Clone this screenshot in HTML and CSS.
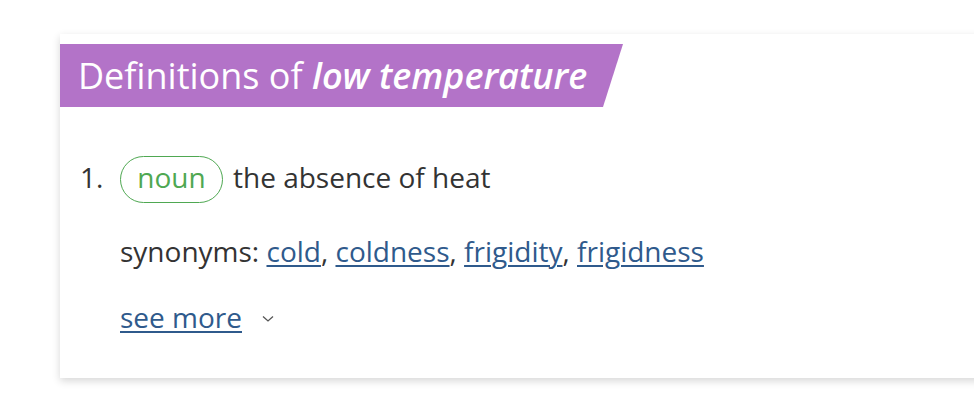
FILE: index.html
```html
<!DOCTYPE html>
<html>
<head>
<meta charset="utf-8">
<link rel="stylesheet" href="styles.css">
</head>
<body>
<div class="page">
<div class="card">
  <h3 class="banner">Definitions of <i>low temperature</i></h3>
  <ol class="defs">
    <li class="def">
      <div class="line">
        <span class="num">1.</span>
        <span class="pos">noun</span>
        <span class="gloss">the absence of heat</span>
      </div>
      <div class="syn">synonyms: <a href="#">cold</a>, <a href="#">coldness</a>, <a href="#">frigidity</a>, <a href="#">frigidness</a></div>
      <div class="more"><a href="#">see more</a>
        <svg class="chev" width="12" height="8" viewBox="0 0 12 8"><path d="M1 1.5 L6 6 L11 1.5" fill="none" stroke="#555" stroke-width="1.3"/></svg>
      </div>
    </li>
  </ol>
</div>
</div>
</body>
</html>
```
FILE: styles.css
```css
html, body {
  margin: 0;
  padding: 0;
  background: #ffffff;
}
body {
  font-family: "Open Sans", "Liberation Sans", sans-serif;
  color: #333333;
}
.page {
  width: 974px;
  height: 400px;
  overflow: hidden;
  padding-top: 34px;
  box-sizing: border-box;
}
.card {
  margin-left: 60px;
  width: 1000px;
  height: 344px;
  background: #fff;
  box-shadow: 0 3px 8px rgba(0, 0, 0, 0.16);
  padding-top: 10px;
  box-sizing: border-box;
}
.banner {
  margin: 0;
  width: 563px;
  height: 63px;
  box-sizing: border-box;
  padding-left: 18px;
  background: #b373c8;
  color: #fff;
  font-weight: 400;
  font-size: 36px;
  line-height: 63px;
  clip-path: polygon(0 0, 563px 0, 543px 100%, 0 100%);
  white-space: nowrap;
}
.banner i {
  font-weight: 600;
}
.defs {
  list-style: none;
  margin: 0;
  padding: 0;
}
.def {
  padding: 49px 0 0 20px;
  font-size: 28px;
  line-height: 38px;
}
.line {
  display: flex;
  align-items: center;
  height: 47px;
}
.num {
  width: 40px;
  margin-bottom: 6px;
}
.gloss {
  margin-bottom: 6px;
}
.pos {
  display: inline-flex;
  align-items: center;
  justify-content: center;
  box-sizing: border-box;
  width: 103px;
  height: 47px;
  padding-bottom: 6px;
  border: 1.6px solid #4fa852;
  border-radius: 24px;
  color: #4fa852;
  margin-right: 10px;
}
.syn {
  margin: 29px 0 0 40px;
}
a {
  color: #2f5a8c;
  text-decoration: underline;
  text-underline-offset: 3px;
  text-decoration-thickness: 1.5px;
}
.more {
  margin: 28px 0 0 40px;
  display: flex;
  align-items: center;
}
.chev {
  margin-left: 20px;
  margin-top: 4px;
}
```
